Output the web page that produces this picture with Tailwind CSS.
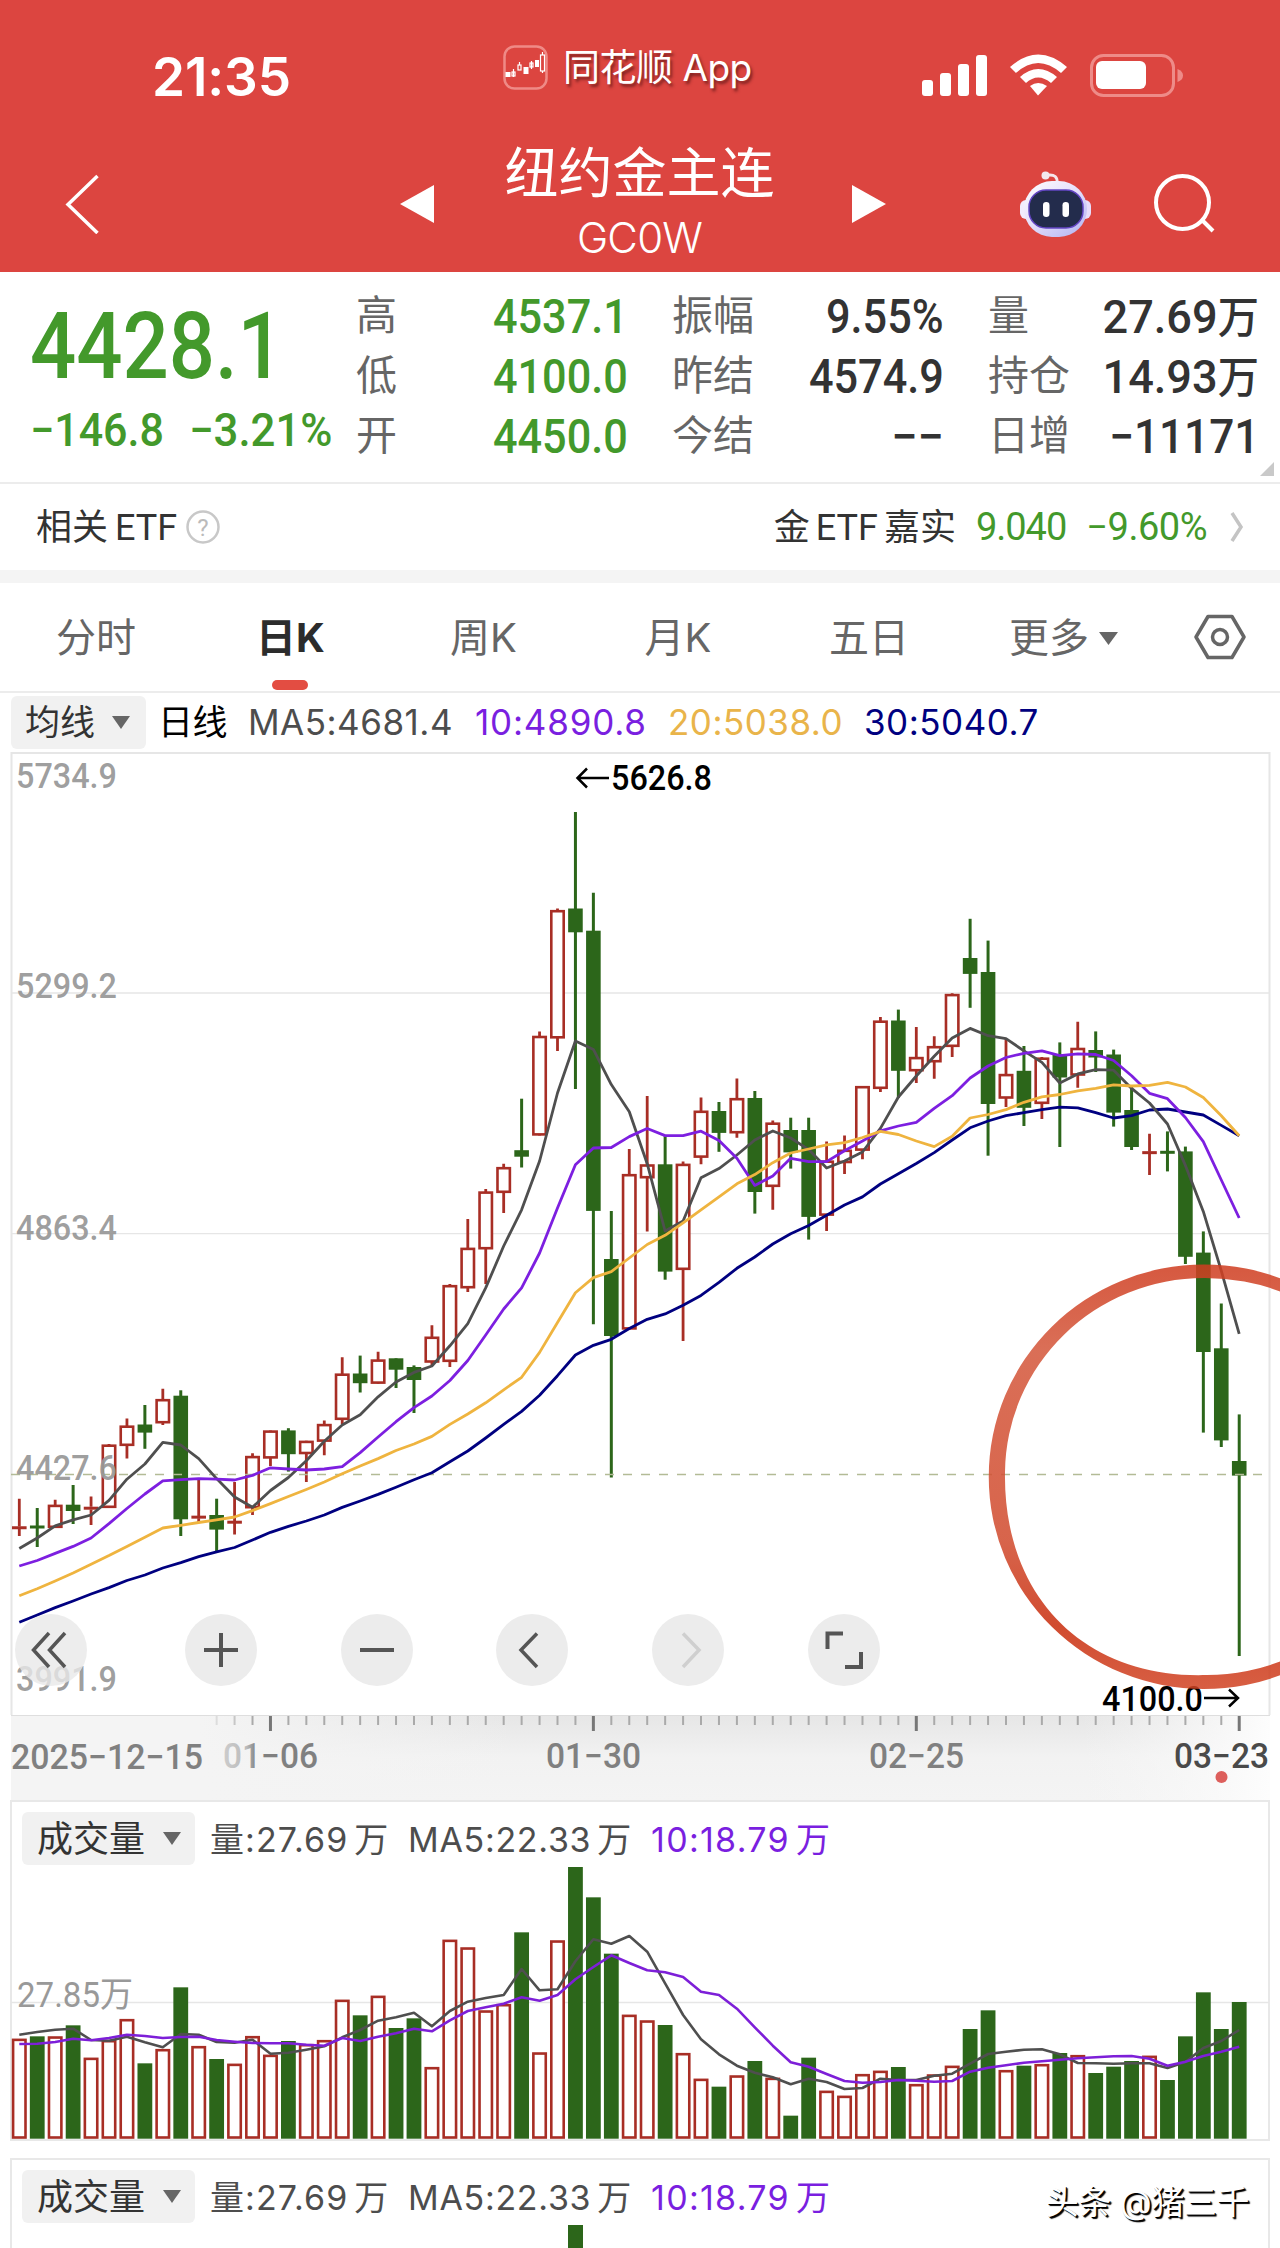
<!DOCTYPE html>
<html lang="zh-CN">
<head>
  <meta charset="UTF-8" />
  <meta name="viewport" content="width=device-width, initial-scale=1.0"/>
  <title>纽约金主连 GC0W</title>
  <script src="https://cdn.jsdelivr.net/npm/@tailwindcss/browser@4"></script>
</head>
<body class="bg-white text-[#333] font-[Inter,'Noto_Sans_CJK_SC',sans-serif] w-[1280px] h-[2248px] overflow-hidden">

  <!-- Header -->
  <header class="bg-[#dc4540] text-white h-[272px]">
    <!-- Status bar -->
    <div class="flex items-center h-[150px] pl-[152px] pr-[90px]">
      <div class="w-[351px] shrink-0 text-[53px] leading-none font-semibold tracking-[-0.1px] pt-[5px]">21:35</div>
      <div class="flex items-center w-[417px] shrink-0 -mt-[15px]">
        <svg class="w-[46px] h-[46px] shrink-0" viewBox="0 0 46 46" fill="none">
          <rect x="1.5" y="1.5" width="42" height="42" rx="10" stroke="#ef8a86" stroke-width="2.5"/>
          <g fill="#fff"><rect x="2.500" y="27" width="5" height="5"/><rect x="20.500" y="22" width="5" height="7"/><rect x="32" y="15" width="4" height="7"/></g>
          <g stroke="#fff" stroke-width="1.2"><rect x="9" y="27" width="3" height="4"/><path d="M10.500 24v8"/><rect x="15" y="20" width="3" height="5"/><path d="M16.500 17v3"/><rect x="27" y="18" width="3" height="4"/><path d="M28.500 16v8"/><rect x="37.500" y="10" width="4" height="16"/><path d="M39.500 7v3M39.500 26v2"/></g>
        </svg>
        <span class="ml-[14px] text-[37px] leading-none whitespace-nowrap tracking-[-0.5px] [text-shadow:2px_3px_3px_rgba(90,20,20,0.7)]">同花顺 App</span>
      </div>
      <svg class="w-[270px] h-[46px] shrink-0" viewBox="920 52 270 46">
        <g fill="#fff">
          <rect x="922" y="80" width="11" height="16" rx="3"/><rect x="940" y="73" width="11" height="23" rx="3"/>
          <rect x="958" y="64" width="11" height="32" rx="3"/><rect x="976" y="55" width="11" height="41" rx="3"/>
          <path d="M1010 67 Q1038 42 1067 67 L1061 73 Q1038 53 1016 73 Z"/>
          <path d="M1020 77 Q1038 61 1057 77 L1051 83 Q1038 72 1026 83 Z"/>
          <path d="M1030 86 Q1038 80 1047 86 L1038 95.500 Z"/>
          <rect x="1096" y="61" width="50" height="28" rx="6"/>
        </g>
        <rect x="1091.500" y="55.500" width="82" height="40" rx="12" fill="none" stroke="#ee8b88" stroke-width="3"/>
        <path d="M1177.500 69 q5.500 2 5.500 6.500 t-5.500 6.500z" fill="#ee8b88"/>
      </svg>
    </div>

    <!-- Title bar -->
    <div class="flex items-center h-[122px] pl-[64px] pr-[62px] -mt-[7px]">
      <svg class="w-[36px] h-[60px]" viewBox="0 0 36 60" fill="none" stroke="#fff" stroke-width="3.500"><path d="M33.500 2 L4 30.500 L33.500 59"/></svg>
      <svg class="w-[34px] h-[38px] ml-[300px]" viewBox="0 0 34 38" fill="#fff"><path d="M34 0v38L0 19z"/></svg>
      <div class="w-[418px] pr-[7px] text-center">
        <div class="text-[54px] leading-[62px] -mt-[3px]">纽约金主连</div>
        <div class="text-[42px] leading-[50px] font-light tracking-[-0.8px] mt-[8px]">GC0W</div>
      </div>
      <svg class="w-[34px] h-[38px]" viewBox="0 0 34 38" fill="#fff"><path d="M0 0v38L34 19z"/></svg>
      <svg class="w-[74px] h-[70px] ml-[132px]" viewBox="1018 168 74 70">
        <defs>
          <linearGradient id="head" x1="0" y1="0" x2="0.800" y2="1"><stop offset="0" stop-color="#fff"/><stop offset="0.500" stop-color="#e6e0fb"/><stop offset="1" stop-color="#b9b9f3"/></linearGradient>
        </defs>
        <path d="M1057 182 q1-9-9-8" fill="none" stroke="#f6e6ea" stroke-width="3"/><circle cx="1045.500" cy="174.500" r="4" fill="#f3e8ee"/>
        <rect x="1020" y="199" width="12" height="19" rx="6" fill="#f2ecfd"/><rect x="1079" y="199" width="12" height="19" rx="6" fill="#e8defb"/>
        <rect x="1024" y="180" width="63" height="56" rx="28" fill="url(#head)"/>
        <rect x="1029" y="189" width="54" height="38" rx="17" fill="#232c4c" stroke="#6345c4" stroke-width="1.500"/>
        <rect x="1043" y="201" width="6.500" height="15" rx="3.200" fill="#fff"/><rect x="1062.500" y="201" width="6.500" height="15" rx="3.200" fill="#fff"/>
      </svg>
      <svg class="w-[64px] h-[62px] ml-[62px]" viewBox="1154 174 64 62" fill="none" stroke="#fff" stroke-width="4"><circle cx="1182.500" cy="203.500" r="26.500"/><path d="M1202 221 L1213 232"/></svg>
    </div>
  </header>

  <!-- Quote panel -->
  <section class="relative h-[212px] border-b-2 border-[#ececec] flex font-[Roboto,'Noto_Sans_CJK_SC',sans-serif]">
    <div class="w-[356px] pl-[30px] text-[#43992b]">
      <div class="text-[93px] leading-[92px] font-medium w-fit origin-left scale-x-[0.875] mt-[29px]">4428.1</div>
      <div class="flex text-[46px] leading-[50px] font-medium mt-[12px] whitespace-nowrap">
        <div class="w-[159px]"><span class="inline-block origin-left scale-x-[0.935]">−146.8</span></div>
        <span class="inline-block origin-left scale-x-[0.95]">−3.21%</span>
      </div>
    </div>
    <div class="w-[272px] mt-[15px] text-[41px] leading-[59px]">
      <div class="flex justify-between h-[60px]"><span class="text-[#666]">高</span><span class="text-[#43992b] text-[48px] font-medium origin-right scale-x-[0.9]">4537.1</span></div>
      <div class="flex justify-between h-[60px]"><span class="text-[#666]">低</span><span class="text-[#43992b] text-[48px] font-medium origin-right scale-x-[0.9]">4100.0</span></div>
      <div class="flex justify-between h-[60px]"><span class="text-[#666]">开</span><span class="text-[#43992b] text-[48px] font-medium origin-right scale-x-[0.9]">4450.0</span></div>
    </div>
    <div class="w-[272px] ml-[44px] mt-[15px] text-[41px] leading-[59px]">
      <div class="flex justify-between h-[60px]"><span class="text-[#666]">振幅</span><span class="text-[48px] font-medium origin-right scale-x-[0.9]">9.55%</span></div>
      <div class="flex justify-between h-[60px]"><span class="text-[#666]">昨结</span><span class="text-[48px] font-medium origin-right scale-x-[0.9]">4574.9</span></div>
      <div class="flex justify-between h-[60px]"><span class="text-[#666]">今结</span><span class="text-[47px] font-medium">−−</span></div>
    </div>
    <div class="w-[271px] ml-[44px] mt-[15px] text-[41px] leading-[59px]">
      <div class="flex justify-between h-[60px]"><span class="text-[#666]">量</span><span class="text-[47px] font-medium origin-right scale-x-[0.96]">27.69<span class="text-[43px]">万</span></span></div>
      <div class="flex justify-between h-[60px]"><span class="text-[#666]">持仓</span><span class="text-[47px] font-medium origin-right scale-x-[0.96]">14.93<span class="text-[43px]">万</span></span></div>
      <div class="flex justify-between h-[60px]"><span class="text-[#666]">日增</span><span class="text-[48px] font-medium origin-right scale-x-[0.92]">−11171</span></div>
    </div>
    <svg class="absolute right-[6px] bottom-[6px] w-[14px] h-[14px]" viewBox="0 0 14 14" fill="#c9c9c9"><path d="M14 0v14H0z"/></svg>
  </section>

  <!-- Related ETF -->
  <section class="flex items-center h-[87px] pl-[36px] pr-[36px] text-[36px] leading-none border-b border-[#f4f4f4]">
    <span>相关<span class="ml-[7px] font-[Roboto]">ETF</span></span>
    <svg class="w-[36px] h-[36px] ml-[8px]" viewBox="0 0 36 36"><circle cx="18" cy="18" r="15.500" fill="none" stroke="#c8c8c8" stroke-width="2.500"/><text x="18" y="26.500" text-anchor="middle" font-family="Roboto" font-size="24" fill="#bbb">?</text></svg>
    <span class="ml-auto">金<span class="mx-[6px] font-[Roboto]">ETF</span>嘉实</span>
    <span class="ml-[20px] text-[38px] text-[#43992b] font-[Roboto] tracking-[-1px]">9.040</span>
    <span class="ml-[20px] text-[38px] text-[#43992b] font-[Roboto] tracking-[-0.5px]">−9.60%</span>
    <svg class="w-[14px] h-[30px] ml-[23px]" viewBox="0 0 14 30" fill="none" stroke="#c4c4c4" stroke-width="3.500"><path d="M2 1 L11 15 L2 29"/></svg>
  </section>
  <div class="h-[12px] bg-[#f4f4f4]"></div>

  <!-- Period tabs -->
  <nav class="flex items-center h-[110px] pt-[2px] border-b-2 border-[#ececec] text-[40px] leading-none text-[#666]">
    <span class="w-[192px] text-center">分时</span>
    <span class="relative w-[197px] text-center font-bold text-[#2c2c2c]">日K<i class="absolute left-[80px] top-[62px] w-[36px] h-[10px] rounded-full bg-[#e34d42]"></i></span>
    <span class="w-[189px] text-center">周K</span>
    <span class="w-[200px] text-center">月K</span>
    <span class="w-[182px] text-center">五日</span>
    <span class="ml-[49px]">更多</span>
    <svg class="w-[19px] h-[13px] ml-[10px]" viewBox="0 0 19 13" fill="#666"><path d="M0 0h19L9.500 13z"/></svg>
    <svg class="w-[52px] h-[46px] ml-[76px] -mt-[2px]" viewBox="0 0 52 46" fill="none" stroke="#666" stroke-width="3.500"><path d="M14 2.500h24l12 20.500l-12 20.500h-24L2 23z" stroke-linejoin="round"/><circle cx="26" cy="23" r="7.500"/></svg>
  </nav>

  <!-- MA legend -->
  <div class="flex items-center h-[59px] pl-[11px] text-[35px] leading-none whitespace-nowrap tracking-[0.5px]">
    <div class="flex items-center w-[135px] h-[53px] pl-[14px] rounded-md bg-[#f1f1f1] tracking-normal">均线<svg class="w-[18px] h-[13px] ml-[17px]" viewBox="0 0 18 13" fill="#666"><path d="M0 0h18L9 13z"/></svg></div>
    <span class="w-[102px] pl-[12px] text-black tracking-[-0.5px]">日线</span>
    <span class="w-[227px] text-[#4d4d4d]">MA5:4681.4</span>
    <span class="w-[193px] text-[#7a1fe0] tracking-[0.8px]">10:4890.8</span>
    <span class="w-[196px] text-[#e9b44a]">20:5038.0</span>
    <span class="text-[#000080]">30:5040.7</span>
  </div>

  <!-- Candles -->
  <section class="relative">
    <svg class="block w-[1280px] h-[963px]" viewBox="0 752 1280 963" font-family="Roboto">
      <g stroke="#e6e6e6" fill="none">
        <path d="M11.500 1715V753H1269.500V1715" stroke-width="2"/>
        <path d="M11 993H1269M11 1233.700H1269" stroke-width="1.300"/>
      </g>
      <g id="candles"></g>
      <path d="M11 1474.400H1269" stroke="#b3bb96" stroke-width="1.500" stroke-dasharray="9 9"/>
      <g id="averages" fill="none" stroke-width="2.800" stroke-linejoin="round"></g>
      <g font-size="35" font-weight="500" fill="#999" fill-opacity="0.950">
        <text x="16" y="788" textLength="101" lengthAdjust="spacingAndGlyphs">5734.9</text>
        <text x="16" y="998" textLength="101" lengthAdjust="spacingAndGlyphs">5299.2</text>
        <text x="16" y="1240" textLength="101" lengthAdjust="spacingAndGlyphs">4863.4</text>
        <text x="16" y="1480" textLength="101" lengthAdjust="spacingAndGlyphs">4427.6</text>
        <text x="16" y="1691" textLength="101" lengthAdjust="spacingAndGlyphs">3991.9</text>
      </g>
      <g font-size="35" font-weight="500" fill="#000">
        <text x="611" y="790" textLength="101" lengthAdjust="spacingAndGlyphs">5626.8</text>
        <text x="1102" y="1711" textLength="101" lengthAdjust="spacingAndGlyphs">4100.0</text>
      </g>
      <g fill="none" stroke="#000" stroke-width="2.500"><path d="M609 778H578M587 768.500L577.500 778L587 787.500"/><path d="M1204 1698H1237M1229 1689.500L1238 1698L1229 1706.500"/></g>
      <!-- Hand-drawn ring -->
      <defs><linearGradient id="ring" x1="0" y1="0" x2="0" y2="1"><stop offset="0" stop-color="#cf3d20"/><stop offset="0.200" stop-color="#d4573b"/><stop offset="0.650" stop-color="#d14b2e"/><stop offset="0.850" stop-color="#c92e0e"/><stop offset="1" stop-color="#d14424"/></linearGradient></defs>
      <path fill="url(#ring)" fill-opacity="0.860" fill-rule="evenodd" d="M1204 1264.500A215 212 0 0 0 1204 1689A215 212 0 0 0 1204 1264.500Z M1204 1278A199 196 0 0 0 1005 1472C1003 1597 1085 1679 1207 1675A206 198 0 0 0 1204 1278Z"/>
    </svg>

    <!-- Chart controls -->
    <div class="absolute left-[15px] top-[862px] flex">
      <button class="w-[72px] h-[72px] rounded-full bg-[#e8e8e8]/80"><svg class="w-full h-full" viewBox="0 0 72 72" fill="none" stroke="#555" stroke-width="3.500"><path d="M34 19L18.500 36L34 53M50 19L34.500 36L50 53"/></svg></button>
      <button class="w-[72px] h-[72px] rounded-full bg-[#ececec] ml-[98px]"><svg class="w-full h-full" viewBox="0 0 72 72" fill="none" stroke="#555" stroke-width="4"><path d="M19 36H53M36 19V53"/></svg></button>
      <button class="w-[72px] h-[72px] rounded-full bg-[#ececec] ml-[84px]"><svg class="w-full h-full" viewBox="0 0 72 72" fill="none" stroke="#555" stroke-width="4"><path d="M19 36H53"/></svg></button>
      <button class="w-[72px] h-[72px] rounded-full bg-[#ececec] ml-[83px]"><svg class="w-full h-full" viewBox="0 0 72 72" fill="none" stroke="#555" stroke-width="3.500"><path d="M41 19.500L25 36L41 53"/></svg></button>
      <button class="w-[72px] h-[72px] rounded-full bg-[#ececec] ml-[84px]"><svg class="w-full h-full" viewBox="0 0 72 72" fill="none" stroke="#cfcfcf" stroke-width="3.500"><path d="M31 19.500L47 36L31 53"/></svg></button>
      <button class="w-[72px] h-[72px] rounded-full bg-[#ececec] ml-[84px]"><svg class="w-full h-full" viewBox="0 0 72 72" fill="none" stroke="#555" stroke-width="4"><path d="M19.500 35V19.500H35M53 38V53H37"/></svg></button>
    </div>
  </section>

  <!-- Time axis -->
  <svg class="block w-[1280px] h-[85px]" viewBox="0 1715 1280 85" font-family="Roboto" font-size="35" font-weight="500">
    <defs>
      <linearGradient id="axis" x1="0" y1="0" x2="0" y2="1"><stop offset="0" stop-color="#e6e6e6"/><stop offset="0.500" stop-color="#f2f2f2"/><stop offset="1" stop-color="#f4f4f4"/></linearGradient>
      <linearGradient id="fade" x1="0" y1="0" x2="1" y2="0"><stop offset="0.150" stop-color="#f4f4f4"/><stop offset="0.400" stop-color="#f4f4f4" stop-opacity="0"/><stop offset="0.850" stop-color="#f6f6f6" stop-opacity="0"/><stop offset="1" stop-color="#fdfdfd"/></linearGradient>
      <linearGradient id="zero" x1="0" y1="0" x2="1" y2="0"><stop offset="0" stop-color="#ccc"/><stop offset="0.250" stop-color="#bbb"/><stop offset="0.350" stop-color="#808080"/></linearGradient>
    </defs>
    <path d="M11 1715H1270V1800H11z" fill="url(#axis)"/>
    <path d="M11 1715H1270V1800H11z" fill="url(#fade)"/>
    <path d="M11 1715.500H1270" stroke="#dedede"/>
    <g id="ticks"></g>
    <g fill="#808080">
      <text x="11" y="1769" textLength="192" lengthAdjust="spacingAndGlyphs">2025−12−15</text>
      <text x="223" y="1768" textLength="95" lengthAdjust="spacingAndGlyphs" fill="url(#zero)">01−06</text>
      <text x="546" y="1768" textLength="95" lengthAdjust="spacingAndGlyphs">01−30</text>
      <text x="869" y="1768" textLength="95" lengthAdjust="spacingAndGlyphs">02−25</text>
      <text x="1174" y="1768" textLength="95" lengthAdjust="spacingAndGlyphs" fill="#4a4a4a">03−23</text>
    </g>
    <circle cx="1221.500" cy="1777" r="6" fill="#dd5f5c"/>
  </svg>

  <!-- Volume -->
  <section class="mx-[10px] h-[341px] border-2 border-[#e8e8e8]">
    <div class="flex items-center pl-[10px] pt-[10px] text-[34px] leading-none whitespace-nowrap">
      <div class="flex items-center w-[173px] h-[53px] pl-[15px] rounded-md bg-[#f1f1f1] text-[36px]">成交量<svg class="w-[18px] h-[13px] ml-[18px]" viewBox="0 0 18 13" fill="#666"><path d="M0 0h18L9 13z"/></svg></div>
      <span class="w-[213px] pl-[15px] pt-[2px] text-[#4d4d4d] tracking-[1.1px]">量:27.69<span class="ml-[6px]">万</span></span>
      <span class="w-[243px] pt-[2px] text-[#4d4d4d] tracking-[0.7px]">MA5:22.33<span class="ml-[6px]">万</span></span>
      <span class="pt-[2px] text-[#7a1fe0] tracking-[1.3px]">10:18.79<span class="ml-[6px]">万</span></span>
    </div>
    <svg class="block w-[1256px] h-[274px]" viewBox="12 1865 1256 274" overflow="visible">
      <path d="M11 2002.500H1269" stroke="#e6e6e6" stroke-width="1.500"/>
      <text x="17" y="2007" font-family="Roboto, 'Noto Sans CJK SC'" font-size="35" fill="#999" textLength="116" lengthAdjust="spacingAndGlyphs">27.85万</text>
      <g id="volumes"></g>
      <g id="volumeAverages" fill="none" stroke-width="2.600" stroke-linejoin="round"></g>
    </svg>
  </section>

  <!-- Volume, second pane -->
  <section class="mx-[10px] mt-[17px] h-[120px] border-2 border-b-0 border-[#e8e8e8]">
    <div class="flex items-center pl-[10px] pt-[10px] text-[34px] leading-none whitespace-nowrap">
      <div class="flex items-center w-[173px] h-[53px] pl-[15px] rounded-md bg-[#f1f1f1] text-[36px]">成交量<svg class="w-[18px] h-[13px] ml-[18px]" viewBox="0 0 18 13" fill="#666"><path d="M0 0h18L9 13z"/></svg></div>
      <span class="w-[213px] pl-[15px] pt-[2px] text-[#4d4d4d] tracking-[1.1px]">量:27.69<span class="ml-[6px]">万</span></span>
      <span class="w-[243px] pt-[2px] text-[#4d4d4d] tracking-[0.7px]">MA5:22.33<span class="ml-[6px]">万</span></span>
      <span class="pt-[2px] text-[#7a1fe0] tracking-[1.3px]">10:18.79<span class="ml-[6px]">万</span></span>
      <span class="ml-auto mr-[19px] mt-[11px] text-[33px] tracking-[-0.4px] text-white [text-shadow:2px_2px_1px_#000,1px_1px_0_#000]">头条 @猪三千</span>
    </div>
    <div class="ml-[556px] mt-[2px] w-[15px] h-[30px] bg-[#2c661a]"></div>
  </section>

  <script>
    const x0 = 19.3;
    const step = 17.94;
    const red = "#a82e25";
    const green = "#2c661a";

    // direction, high, body top, body bottom, low
    const candles = [
      ["r",1498.7,1525.5,1530,1536],["g",1508,1525.5,1528.5,1547],["r",1499.8,1504.7,1528,1528],["g",1485,1504.7,1511,1524],["r",1496.5,1505.8,1510.6,1525],
      ["r",1444,1444.5,1508,1508],["r",1418.5,1425.5,1446,1458.6],["g",1405,1424.5,1432.6,1448.8],["r",1388.7,1399,1423.4,1425],["g",1390.3,1395.7,1519.3,1536],
      ["r",1479.2,1515,1519.3,1522.5],["g",1498.7,1515,1529.6,1552.4],["r",1481.9,1520.4,1524,1534.5],["r",1453.2,1455.9,1508.4,1515],["r",1430.4,1430.4,1458.6,1466],
      ["g",1428.2,1430.4,1454.2,1471.6],["r",1440.7,1440.7,1454.2,1481.9],["r",1420.6,1423.9,1441.8,1455.3],["r",1357.2,1373.5,1420,1423.9],["g",1355.6,1373.5,1383.2,1392.5],
      ["r",1351.8,1359.4,1383.8,1383.8],["g",1358.3,1358.3,1369.7,1388],["g",1365.4,1367,1380,1413],["r",1325.3,1336.6,1362.7,1365],["r",1284,1285,1362,1367],
      ["r",1219,1247.7,1288.4,1292],["r",1189,1191.4,1249.4,1284],["r",1163.7,1167,1193,1213],["g",1098.7,1150.2,1156.7,1167.5],["r",1031.5,1035.8,1135.6,1135.6],
      ["r",908.5,910,1038.5,1051],["g",812,908.5,932.3,1089],["g",892.7,930.7,1210.9,1324.2],["g",1210.9,1259,1336,1477.6],["r",1149,1174,1329.6,1329.6],
      ["r",1096,1164.3,1178.4,1231.5],["g",1135,1164.3,1271.6,1279.7],["r",1161.6,1163.7,1270,1341],["r",1097.6,1110.6,1157.8,1164.3],["g",1102,1111,1132.9,1151.8],
      ["r",1078.6,1098,1133.4,1137.7],["g",1091,1098,1192,1213.6],["r",1120.4,1122.5,1187,1209.8],["g",1117.7,1130,1152.4,1168.6],["g",1117.7,1130,1216.9,1239.6],
      ["r",1141.5,1160.5,1215.8,1231],["r",1135.6,1149.6,1163.2,1174],["r",1086,1086,1150.8,1159.3],["r",1016.9,1020.5,1089,1092],["g",1009.6,1020.5,1070.8,1098],
      ["r",1027,1056.9,1071.4,1083],["r",1036.3,1046,1062.4,1078.7],["r",993.3,993.9,1047,1056.9],["g",918.8,958,973.9,1007.8],["g",940.6,972,1104,1155.7],
      ["r",1039,1073.9,1098.7,1107],["g",1046,1070.8,1107.8,1126],["r",1056.9,1057.5,1104,1119],["g",1042.4,1054.5,1077.5,1147],["r",1021.8,1047.8,1075.7,1087.8],
      ["g",1031.4,1050,1057.5,1072],["g",1049.6,1054.5,1112.6,1126.6],["g",1086,1110,1147,1150],["r",1133.8,1150.8,1154.5,1175],["g",1131.4,1150.8,1153,1171.4],
      ["g",1146.6,1151.4,1256.8,1264],["g",1231.4,1252.6,1352,1432.6],["g",1303.5,1348.3,1440.4,1447],["g",1414.4,1461,1475.6,1656]
    ];

    const averages = {
      "#000080": [1622.3,1615,1607.6,1601,1594,1587.6,1580.5,1575,1568,1562.6,1556.7,1551.8,1547.5,1540,1532.3,1526.3,1521,1515,1507.4,1501,1494.4,1487.3,1479.7,1472.7,1461.8,1451,1438,1424.4,1411.4,1395.2,1375.7,1355,1345.3,1339.3,1328.5,1319.3,1313.9,1305.2,1295.4,1282.4,1268.3,1257,1244,1233.7,1225.5,1215.2,1205,1196.9,1184,1173.8,1163.5,1152.6,1140,1127.8,1121,1115.7,1112.6,1109.6,1107.2,1107.8,1112.6,1118,1115.7,1110,1109,1112,1115,1125.4,1135.7],
      "#4f4f4f": [1548.5,1538,1525.8,1519.8,1515,1500.3,1479.2,1464,1442.3,1445,1458.6,1478.6,1497,1507.3,1490.5,1477.5,1460.7,1441.2,1425,1414.7,1396.8,1382,1372.4,1366,1345.8,1323.6,1287.9,1246,1209.8,1161,1093,1041,1049.4,1084.6,1111.7,1163.7,1231,1221,1177.8,1168.6,1155,1140,1131,1138,1149.6,1168,1161,1152,1128.4,1097,1076,1056.3,1038,1028.4,1035.7,1038.7,1050.8,1062.4,1083,1073.9,1069.6,1070.2,1088.4,1103,1124,1165.4,1211.4,1270.8,1333.8],
      "#7d1fe0": [1566,1560.5,1553.4,1546.4,1538,1523.6,1508.5,1494,1480.8,1479.7,1478.6,1479.2,1480,1475.4,1467.8,1469,1470,1469,1466.7,1452.6,1437,1421.7,1407.6,1396,1380.5,1360.5,1335,1309,1287.9,1253,1208,1164.8,1148,1147.5,1136.6,1128.5,1135.6,1135.6,1131.2,1140.4,1158.3,1185.4,1176,1158.3,1161.6,1161.6,1150.7,1141,1130.8,1126,1122.3,1108.4,1095.7,1078,1066,1057.5,1053.3,1050.8,1055.7,1053.9,1054.5,1060.5,1075.7,1093.3,1098.7,1117.5,1141.7,1180,1218],
      "#efb43f": [1595.7,1588.7,1581,1573,1564.3,1555.6,1546.4,1537.2,1528,1525.3,1522.5,1519.8,1517,1510.6,1503.6,1496.5,1489.5,1482,1473.8,1466,1458.6,1450.5,1444,1436.4,1424.4,1414,1402.8,1389.8,1377.3,1352.4,1322.5,1292.7,1277.6,1271.6,1258,1244.5,1235.3,1222.8,1209.8,1196.8,1183.8,1174.6,1162.7,1153,1149,1144.8,1142.6,1137.5,1131.4,1134.5,1141,1146.6,1136.3,1118,1114.5,1109.6,1102.3,1096.9,1094.5,1090.8,1088.4,1084.8,1086,1085.4,1082.3,1087,1097.5,1115.7,1135.7]
    };

    // volume values are thirds of a pixel below the pane's top edge
    const volumes = [716,709,709,676,773,720,657,790,747,562,738,777,791,708,764,723,732,720,599,646,587,684,655,801,419,442,631,612,397,757,421,201,292,461,644,661,675,759,836,860,826,783,833,947,773,872,887,822,812,801,852,823,797,687,631,810,797,792,759,765,819,800,783,767,840,709,577,687,606];
    const volumeAverages = {
      "#4f4f4f": [704,696,689,686,720,722,710,727,742,702,704,726,728,719,761,758,749,739,712,690,662,652,638,679,633,605,594,585,507,571,568,484,418,431,408,455,550,645,718,763,797,818,832,853,836,846,867,864,836,840,840,827,821,791,762,755,749,748,763,789,790,791,790,790,804,786,744,723,690],
      "#7d1fd8": [732,731,726,716,721,714,704,708,714,711,710,720,725,729,730,730,734,737,714,723,710,700,686,694,661,633,622,611,592,602,585,538,501,466,489,511,517,531,575,585,626,682,737,787,800,822,843,848,846,840,842,845,843,815,803,796,788,784,779,775,772,769,768,776,797,785,768,755,740]
    };

    const at = i => x0 + i * step;
    const line = (values, color, toY) =>
      `<polyline stroke="${color}" points="${values.map((v, i) => at(i).toFixed(1) + "," + toY(v).toFixed(1)).join(" ")}"/>`;

    document.getElementById("candles").innerHTML = candles.map(([c, high, top, bottom, low], i) => {
      const x = at(i);
      const h = Math.max(bottom - top, 3);
      if (c === "g") {
        return `<path d="M${x} ${high}V${low}" stroke="${green}" stroke-width="3"/><rect x="${x - 7.3}" y="${top}" width="14.6" height="${h}" fill="${green}"/>`;
      }
      const wick = `<path d="M${x} ${high}V${top + 1}M${x} ${bottom - 1}V${low}" stroke="${red}" stroke-width="2.8"/>`;
      if (h < 6) return wick + `<path d="M${x - 7.3} ${(top + bottom) / 2}h14.6" stroke="${red}" stroke-width="3"/>`;
      return wick + `<rect x="${x - 6.2}" y="${top + 1.2}" width="12.4" height="${h - 2.4}" fill="#fff" stroke="${red}" stroke-width="2.6"/>`;
    }).join("");

    document.getElementById("averages").innerHTML =
      Object.entries(averages).map(([color, values]) => line(values, color, v => v)).join("");

    document.getElementById("volumes").innerHTML = volumes.map((v, i) => {
      const x = at(i);
      const y = 1800 + v / 3;
      if (candles[i][0] === "g") {
        return `<rect x="${x - 7.4}" y="${y}" width="14.8" height="${2138.7 - y}" fill="${green}"/>`;
      }
      return `<rect x="${x - 6.2}" y="${y + 1.2}" width="12.4" height="${2137.5 - y - 1.2}" fill="#fff" stroke="${red}" stroke-width="2.6"/>`;
    }).join("");

    document.getElementById("volumeAverages").innerHTML =
      Object.entries(volumeAverages).map(([color, values]) => line(values, color, v => 1800 + v / 3)).join("");

    let ticks = "";
    for (let i = 11; i < 69; i++) {
      const major = [14, 32, 50, 68].includes(i);
      const opacity = i === 11 ? 0.3 : i === 12 ? 0.6 : 1;
      ticks += `<path d="M${at(i)} 1716V${major ? 1731 : 1725}" stroke="${major ? "#777" : "#aaa"}" stroke-width="${major ? 3 : 2}" opacity="${opacity}"/>`;
    }
    document.getElementById("ticks").innerHTML = ticks;
  </script>
</body>
</html>
